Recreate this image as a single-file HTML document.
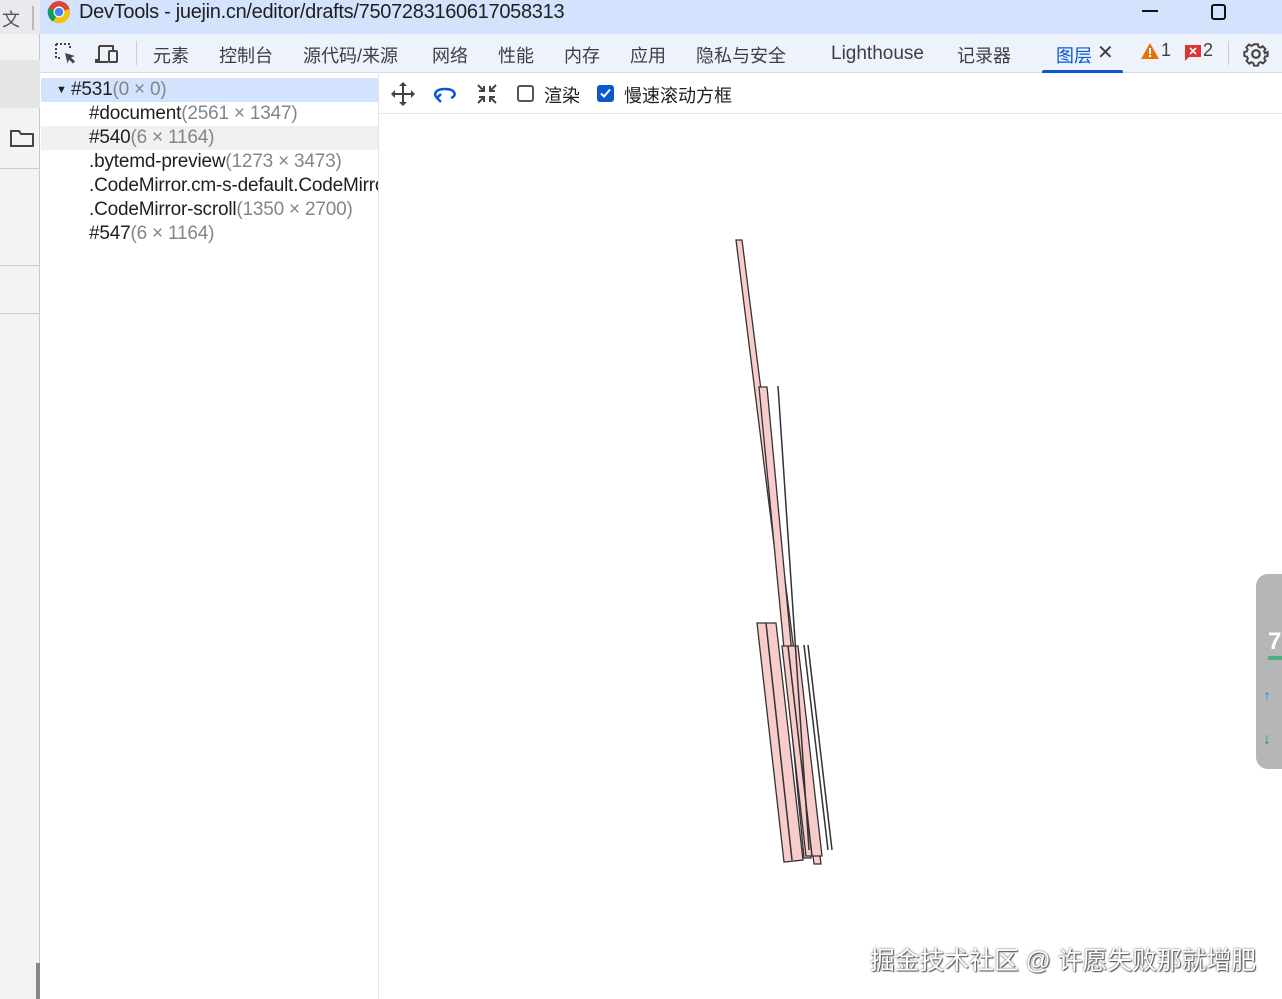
<!DOCTYPE html>
<html><head><meta charset="utf-8"><style>
*{margin:0;padding:0;box-sizing:border-box}
body{width:1282px;height:999px;overflow:hidden;background:#fff;font-family:"Liberation Sans","Noto Sans CJK SC",sans-serif;position:relative;color:#1f1f1f}
.abs{position:absolute}
.title{left:0;top:0;width:1282px;height:34px;background:#d3e3fd}
.tabs{left:40px;top:34px;width:1242px;height:39px;background:#eef3fb;border-bottom:1px solid #d6dce6}
.tab{position:absolute;top:42px;font-size:18px;color:#3c4043}
.left{left:0;top:34px;width:40px;height:965px;background:#f1f3f4;border-right:1px solid #c8c8c8}
.tree{left:41px;top:74px;width:338px;height:925px;border-right:1px solid #e3e3e3}
.row{position:absolute;left:0;width:337px;height:24px;font-size:19px;line-height:24px;letter-spacing:-0.2px}
.g{color:#80868b}
</style></head><body>
<div class="abs title"></div>
<div class="abs" style="left:0;top:0;width:40px;height:34px;background:#e8eaed"></div>
<div class="abs" style="left:2px;top:6px;font-size:18px;color:#555">文</div>
<div class="abs" style="left:32px;top:6px;width:2px;height:24px;background:#bbb"></div>
<svg class="abs" style="left:46px;top:0" width="26" height="26" viewBox="0 0 26 26"><circle cx="13" cy="12" r="11" fill="#db4437"/><path d="M13 12 L23.5 9 A11 11 0 0 1 7 21.5Z" fill="#f4c20d"/><path d="M13 12 L7 21.5 A11 11 0 0 1 2.5 8Z" fill="#0f9d58"/><circle cx="13" cy="12" r="5.5" fill="#fff"/><circle cx="13" cy="12" r="4.3" fill="#4285f4"/></svg>
<div class="abs" style="left:79px;top:0;font-size:20px;line-height:24px;color:#1f1f1f;letter-spacing:-0.3px">DevTools - juejin.cn/editor/drafts/7507283160617058313</div>
<div class="abs" style="left:1142px;top:10px;width:16px;height:2px;background:#111"></div>
<div class="abs" style="left:1211px;top:4px;width:15px;height:16px;border:2px solid #111;border-radius:3px"></div>
<div class="abs left"></div>
<div class="abs" style="left:0;top:60px;width:40px;height:48px;background:#e4e6e8"></div>
<div class="abs" style="left:0;top:168px;width:40px;height:1px;background:#ccc"></div>
<div class="abs" style="left:0;top:265px;width:40px;height:1px;background:#ccc"></div>
<div class="abs" style="left:0;top:313px;width:40px;height:1px;background:#ccc"></div>
<div class="abs" style="left:36px;top:963px;width:4px;height:36px;background:#888"></div>
<svg class="abs" style="left:9px;top:128px" width="26" height="20"><path d="M2 3h8l2 3h12v12H2z" fill="none" stroke="#444" stroke-width="2"/></svg>
<div class="abs tabs"></div>
<svg class="abs" style="left:54px;top:42px" width="24" height="24"><path d="M2 2h14v6M2 2v14h6" fill="none" stroke="#444" stroke-width="2" stroke-dasharray="2 2"/><path d="M11 11l10 3-4 1.5 4 4-2 2-4-4-1.5 4z" fill="#444"/></svg>
<svg class="abs" style="left:95px;top:43px" width="26" height="22"><path d="M4 3h14v4M4 3v14H1v2h12" fill="none" stroke="#444" stroke-width="2"/><rect x="14" y="8" width="8" height="11" rx="1" fill="none" stroke="#444" stroke-width="2"/></svg>
<div class="abs" style="left:136px;top:41px;width:1px;height:24px;background:#ccc"></div>
<div class="tab" style="left:153px">元素</div>
<div class="tab" style="left:219px">控制台</div>
<div class="tab" style="left:303px">源代码/来源</div>
<div class="tab" style="left:432px">网络</div>
<div class="tab" style="left:498px">性能</div>
<div class="tab" style="left:564px">内存</div>
<div class="tab" style="left:630px">应用</div>
<div class="tab" style="left:696px">隐私与安全</div>
<div class="tab" style="left:831px;top:43px;font-size:19px">Lighthouse</div>
<div class="tab" style="left:957px">记录器</div>
<div class="tab" style="left:1056px;color:#0b57d0">图层</div>
<div class="tab" style="left:1097px;top:40px;font-size:20px">✕</div>
<div class="abs" style="left:1042px;top:70px;width:81px;height:3px;background:#0b57d0;border-radius:2px 2px 0 0"></div>
<svg class="abs" style="left:1140px;top:42px" width="20" height="18"><path d="M10 1L19 17H1z" fill="#e8710a"/><rect x="9" y="6" width="2" height="6" fill="#fff"/><rect x="9" y="13" width="2" height="2" fill="#fff"/></svg>
<div class="tab" style="left:1161px;top:40px">1</div>
<svg class="abs" style="left:1184px;top:44px" width="18" height="18"><path d="M1 1h16v12H5l-4 4z" fill="#dc362e"/><path d="M6 4l6 6M12 4l-6 6" stroke="#fff" stroke-width="1.6"/></svg>
<div class="tab" style="left:1203px;top:40px">2</div>
<div class="abs" style="left:1228px;top:41px;width:1px;height:24px;background:#ccc"></div>
<svg class="abs" style="left:1243px;top:41px" width="26" height="26" viewBox="0 0 24 24"><path d="M10 2h4l.6 2.6 2 .9 2.3-1.4 2.8 2.8-1.4 2.3.9 2L24 10v4l-2.6.6-.9 2 1.4 2.3-2.8 2.8-2.3-1.4-2 .9L14 24h-4l-.6-2.6-2-.9-2.3 1.4-2.8-2.8 1.4-2.3-.9-2L0 14v-4l2.6-.6.9-2-1.4-2.3 2.8-2.8 2.3 1.4 2-.9z" transform="scale(.9) translate(1.3 1.3)" fill="none" stroke="#444" stroke-width="2"/><circle cx="12" cy="12" r="3.5" fill="none" stroke="#444" stroke-width="2"/></svg>
<div class="abs tree">
<div class="row" style="top:4px;background:#d3e3fd"><span style="position:absolute;left:15px;top:0;font-size:11px">▼</span><span style="position:absolute;left:30px">#531<span class="g">(0 × 0)</span></span></div>
<div class="row" style="top:28px"><span style="position:absolute;left:48px">#document<span class="g">(2561 × 1347)</span></span></div>
<div class="row" style="top:52px;background:#f1f1f1"><span style="position:absolute;left:48px">#540<span class="g">(6 × 1164)</span></span></div>
<div class="row" style="top:76px"><span style="position:absolute;left:48px">.bytemd-preview<span class="g">(1273 × 3473)</span></span></div>
<div class="row" style="top:100px;overflow:hidden"><span style="position:absolute;left:48px;white-space:nowrap">.CodeMirror.cm-s-default.CodeMirror</span></div>
<div class="row" style="top:124px"><span style="position:absolute;left:48px">.CodeMirror-scroll<span class="g">(1350 × 2700)</span></span></div>
<div class="row" style="top:148px"><span style="position:absolute;left:48px">#547<span class="g">(6 × 1164)</span></span></div>
</div>
<div class="abs" style="left:379px;top:113px;width:903px;height:1px;background:#e3e3e3"></div>
<svg class="abs" style="left:390px;top:81px" width="26" height="26"><path d="M13 2v22M2 13h22" stroke="#444" stroke-width="2"/><path d="M13 1l-4 4h8zM13 25l-4-4h8zM1 13l4-4v8zM25 13l-4-4v8z" fill="#444"/></svg>
<svg class="abs" style="left:432px;top:84px" width="26" height="20"><path d="M6 14C1 12 2 5 13 5s12 7 6 9" fill="none" stroke="#0b57d0" stroke-width="2.5"/><path d="M9 10l-4 4 4 4" fill="none" stroke="#0b57d0" stroke-width="2.5"/></svg>
<svg class="abs" style="left:476px;top:83px" width="22" height="22"><path d="M2 2l6 6M8 3v5H3M20 2l-6 6M14 3v5h5M2 20l6-6M3 14h5v5M20 20l-6-6M19 14h-5v5" fill="none" stroke="#444" stroke-width="2"/></svg>
<div class="abs" style="left:517px;top:85px;width:17px;height:17px;border:2px solid #555;border-radius:3px"></div>
<div class="abs" style="left:544px;top:82px;font-size:18px">渲染</div>
<div class="abs" style="left:597px;top:85px;width:17px;height:17px;background:#0b57d0;border-radius:3px"><svg width="17" height="17" style="display:block"><path d="M4 8.5l3 3 6-7" fill="none" stroke="#fff" stroke-width="2"/></svg></div>
<div class="abs" style="left:624px;top:82px;font-size:18px">慢速滚动方框</div>
<svg class="abs" style="left:0;top:0" width="1282" height="999">
<g fill="#f9cccc" stroke="#333" stroke-width="1.3">
<polygon points="736,240 742,240 821,864 814,864"/>
<polygon points="759,387 767,387 811,858 804,858"/>
<polygon points="757,623 776,623 803,860 784,862"/>
<polygon points="782,646 798,646 822,856 806,856"/>
</g>
<g stroke="#333" stroke-width="1.5" fill="none">
<line x1="778" y1="386" x2="809" y2="850"/>
<line x1="804" y1="645" x2="828" y2="850"/>
<line x1="808" y1="645" x2="832" y2="850"/>
<line x1="766" y1="623" x2="792" y2="860"/>
<line x1="788" y1="646" x2="812" y2="856"/>
</g>
</svg>
<div class="abs" style="left:1256px;top:574px;width:30px;height:195px;background:#b4b6b8;border-radius:12px 0 0 12px"></div>
<div class="abs" style="left:1268px;top:628px;font-size:24px;color:#fff;font-weight:bold">7</div>
<div class="abs" style="left:1268px;top:656px;width:14px;height:4px;background:#4caf7d"></div>
<div class="abs" style="left:1263px;top:688px;font-size:16px;color:#2196f3;font-weight:bold">↑</div>
<div class="abs" style="left:1263px;top:731px;font-size:16px;color:#1aa34a;font-weight:bold">↓</div>
<div class="abs" style="left:870px;top:941px;font-size:24.8px;color:#fff;text-shadow:0 0 2px #555,1px 1px 1px #555">掘金技术社区 @ 许愿失败那就增肥</div>
</body></html>
